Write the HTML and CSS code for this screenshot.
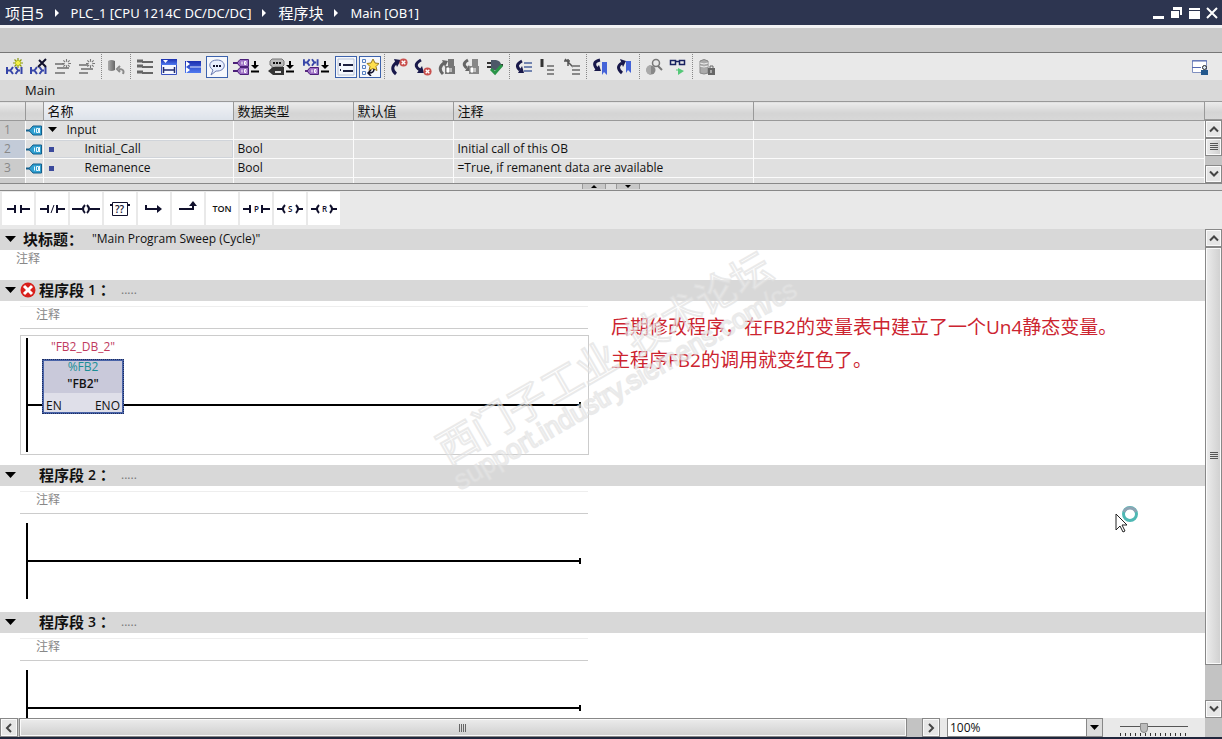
FILE: index.html
```html
<!DOCTYPE html>
<html lang="zh-CN">
<head>
	<meta charset="utf-8">
	<title>Main [OB1]</title>
	<link rel="stylesheet" href="styles.css">
</head>
<body>
	<!-- shapes used more than once -->
	<svg class="defs" width="0" height="0">
		<linearGradient id="gBlue" x1="0" y1="0" x2="0" y2="1"><stop offset="0" stop-color="#1c2fae"/><stop offset="1" stop-color="#4f7af0"/></linearGradient>
		<linearGradient id="gGrey" x1="0" y1="0" x2="1" y2="0"><stop offset="0" stop-color="#aaa"/><stop offset="1" stop-color="#666"/></linearGradient>
		<symbol id="tag" viewBox="0 0 16 11"><path d="M0 5.500h4" stroke="#135f8c" stroke-width="2"/><path d="M3 5.500L7 1h8.500v9H7z" fill="#2f9fd0" stroke="#135f8c"/><path d="M8.500 3.500v4M10.500 3.500h2v4h-2zM13.500 3v5" fill="none" stroke="#e8f8ff"/></symbol>
		<symbol id="ptag" viewBox="0 0 14 8"><path d="M0 4h3" stroke="#5a2a80" stroke-width="2"/><path d="M2 4l3-3.500h8.500v7H5z" fill="#9b6cc4" stroke="#4b1f78"/><path d="M7 2.500v3M9.500 2.500h1.500v3H9.500z" fill="none" stroke="#fff"/></symbol>
		<symbol id="contact" viewBox="0 0 17 9"><path d="M1 1v7M1 4.500h3M7 1L4.500 4.500 7 8M9.500 1L12 4.500 9.500 8M12 4.500h2M15.500 1v7" fill="none" stroke="#3645a8" stroke-width="2"/></symbol>
		<symbol id="spark" viewBox="0 0 10 10"><path d="M5 0v3M5 7v3M0 5h3M7 5h3M1.500 1.500l2 2M8.500 1.500l-2 2M1.500 8.500l2-2M8.500 8.500l-2-2" stroke="currentColor" stroke-width="1.200"/></symbol>
		<symbol id="err" viewBox="0 0 10 10"><circle cx="5" cy="5" r="4.500" fill="#c9504e"/><path d="M3 3l4 4M7 3L3 7" stroke="#fff" stroke-width="1.500"/></symbol>
		<symbol id="up" viewBox="0 0 10 10"><path d="M1 7.500L5 3.500l4 4" fill="none" stroke="#444" stroke-width="2"/></symbol>
		<symbol id="down" viewBox="0 0 10 10"><path d="M1 2.500l4 4 4-4" fill="none" stroke="#444" stroke-width="2"/></symbol>
		<symbol id="grip" viewBox="0 0 10 8"><path d="M1 .5h8M1 2.500h8M1 4.500h8M1 6.500h8" stroke="#555"/></symbol>
		<symbol id="load" viewBox="0 0 8 12"><path d="M0 10.500h8" stroke="#000" stroke-width="2"/><path d="M3 0h2v4h3L4 8 0 4h3z"/></symbol>
	</svg>

	<header class="titlebar">
		<nav class="crumbs">
			<a class="cn" href="#">项目5</a><i></i><a href="#">PLC_1 [CPU 1214C DC/DC/DC]</a><i></i><a class="cn" href="#">程序块</a><i></i><a href="#">Main [OB1]</a>
		</nav>
		<div class="winbtns">
			<button aria-label="Minimize"><svg width="12" height="12"><path d="M1 9h11v3H1z" fill="#fff"/></svg></button>
			<button aria-label="Float"><svg width="12" height="12"><path d="M3 0h9v8h-2V3H3z" fill="#fff"/><path d="M1 4h8v7H1z" fill="#fff"/></svg></button>
			<button aria-label="Maximize"><svg width="12" height="12"><path d="M1 1h11v2H1zM1 4h11v8H1z" fill="#fff"/></svg></button>
			<button aria-label="Close"><svg width="12" height="12"><path d="M1 1l10 10M11 1L1 11" stroke="#fff" stroke-width="2"/></svg></button>
		</div>
	</header>
	<div class="band"></div>

	<div class="toolbar">
		<button aria-label="Insert network"><svg width="18" height="18"><use href="#contact" x="0" y="8" width="17" height="9"/><g color="#8a9a10"><circle cx="12" cy="5" r="3" fill="#f4f046"/><use href="#spark" x="7" y="0" width="10" height="10"/></g></svg></button>
		<button aria-label="Delete network"><svg width="18" height="18"><use href="#contact" x="0" y="8" width="17" height="9"/><path d="M9 2l7 7M16 1L8 9" stroke="#10102c" stroke-width="2"/></svg></button>
		<button aria-label="Insert row"><svg width="18" height="18"><path d="M1 6h9M3 10h12M1 15h10" stroke="#8c8c8c" stroke-width="2"/><g color="#777"><use href="#spark" x="8" y="1" width="9" height="9"/></g></svg></button>
		<button aria-label="Add row"><svg width="18" height="18"><path d="M1 7h9M3 11h12M1 15h9" stroke="#8c8c8c" stroke-width="2"/><g color="#777"><use href="#spark" x="8" y="1" width="9" height="9"/></g></svg></button>
		<span class="sep"></span>
		<button aria-label="Reset start values"><svg width="18" height="18"><path d="M1 3q3-2 7 0v9q-4 2-7 0z" fill="url(#gGrey)"/><path d="M16 16q2-5-4-5M13 8l-3 3 3 3" fill="none" stroke="#8a8a8a" stroke-width="2"/></svg></button>
		<span class="sep"></span>
		<button aria-label="Open all networks"><svg width="18" height="18"><path d="M1 3h6M1 8h6M1 14h6" stroke="#666" stroke-width="3"/><path d="M6 4h11M6 9h11M6 15h11" stroke="#666" stroke-width="2"/></svg></button>
		<button aria-label="Close all networks"><svg width="18" height="18"><path d="M1.500 1.500h15v15h-15z" fill="#f4f7ff" stroke="#3a52c0"/><path d="M1 1h16v6H1z" fill="url(#gBlue)"/><path d="M3 2h5L5.500 5z" fill="#fff"/><path d="M3 12h12M3.500 9v6M14.500 9v6" stroke="#222c70" stroke-width="1.500"/></svg></button>
		<button aria-label="Free-form comments"><svg width="18" height="18"><path d="M1 3h16v12H1z" fill="url(#gBlue)"/><path d="M2 3l4 3-4 3zM2 9l4 3-4 3z" fill="#fff"/><path d="M6 9h11" stroke="#dce6ff"/></svg></button>
		<button class="on" aria-label="Network comments"><svg width="18" height="18"><path d="M9 2c9 0 10 10 1 11H8l-5 4 2-5C-1 8 2 2 9 2z" fill="#e8efff" stroke="#6a7ab0"/><path d="M5 8h2M8 8h2M11 8h2" stroke="#10102c" stroke-width="2"/></svg></button>
		<button aria-label="Operands"><svg width="18" height="18"><use href="#ptag" x="3" y="1" width="14" height="8"/><use href="#ptag" x="3" y="9" width="14" height="8"/><path d="M1 5h4M1 13h4" stroke="#4b1f78" stroke-width="2"/></svg></button>
		<button class="drop" aria-label="Operand options"><svg width="8" height="12"><use href="#load"/></svg></button>
		<button aria-label="Operand display"><svg width="18" height="18"><path d="M5 1h10l2 2v4l-2 2H8l-3 2V8L3 7V3z" fill="#bbb" stroke="#777"/><path d="M6 5h2M9 5h2M12 5h2" stroke="#111" stroke-width="2"/><path d="M1 13l5-4h11v8H6z" fill="#333"/><path d="M8 14h6" stroke="#ddd" stroke-width="2"/></svg></button>
		<button class="drop" aria-label="Display options"><svg width="8" height="12"><use href="#load"/></svg></button>
		<button aria-label="Tag information"><svg width="18" height="18"><use href="#contact" x="1" y="0" width="16" height="9"/><use href="#ptag" x="3" y="9" width="14" height="8"/></svg></button>
		<button class="drop" aria-label="Tag options"><svg width="8" height="12"><use href="#load"/></svg></button>
		<button class="on" aria-label="Show favorites bar"><svg width="18" height="18"><path d="M1 1h16v16H1z" fill="#f4f7fc" stroke="#b8c2d6"/><path d="M3 5v3M3 12h1M6 13h10M6 7h10" stroke="#1c2040" stroke-width="2"/></svg></button>
		<button class="on" aria-label="Favorites"><svg width="18" height="18"><path d="M1.500 1.500h3v3h-3zM1.500 7.500h3v3h-3zM1.500 13.500h3v3h-3z" fill="none" stroke="#557fc0"/><path d="M12 1l2 4 4 .5-3 3 1 4-4-2-4 2 1-4-3-3 4-.5z" fill="#ffdf4c" stroke="#9a7a20"/><path d="M13 11q0 4-5 4M10 12l-3 3 3 3" fill="none" stroke="#10102c" stroke-width="1.500"/></svg></button>
		<span class="sep"></span>
		<button aria-label="Previous error"><svg width="18" height="18"><path d="M6 16Q-1 10 7 4" fill="none" stroke="#18184a" stroke-width="3"/><path d="M4 1l7 1-4 7z" fill="#18184a"/><use href="#err" x="9" y="0" width="9" height="9"/></svg></button>
		<button aria-label="Next error"><svg width="18" height="18"><path d="M7 2Q-2 7 6 12" fill="none" stroke="#18184a" stroke-width="3"/><path d="M3 15h7L8 8z" fill="#18184a"/><use href="#err" x="9" y="9" width="9" height="9"/></svg></button>
		<button aria-label="Previous block"><svg width="18" height="18"><path d="M5 16Q-1 10 6 5" fill="none" stroke="#666" stroke-width="3"/><path d="M4 2l6 1-3 6z" fill="#666"/><path d="M10 1h6v7h-6zM7 8h10v8H7z" fill="#777"/><path d="M9 10h2v4H9zM13 10v4" fill="#fff" stroke="#fff"/></svg></button>
		<button aria-label="Next block"><svg width="18" height="18"><path d="M6 2Q-1 6 5 10" fill="none" stroke="#666" stroke-width="3"/><path d="M3 13h6L7 7z" fill="#666"/><path d="M10 1h6v7h-6zM7 8h10v8H7z" fill="#888"/><path d="M9 10h2v4H9zM13 10v4" fill="#fff" stroke="#fff"/></svg></button>
		<button aria-label="Check consistency"><svg width="18" height="18"><path d="M1 5h5M1 9h5M13 7h4" stroke="#333" stroke-width="2"/><path d="M5 2h5q5 1 5 5t-5 5H5z" fill="#4c5868"/><path d="M5 11l4 4 7-8" fill="none" stroke="#2a9448" stroke-width="3"/></svg></button>
		<span class="sep"></span>
		<button aria-label="Go to"><svg width="18" height="18"><path d="M7 3Q-1 7 5 12" fill="none" stroke="#18184a" stroke-width="3"/><path d="M3 15h6L7 8z" fill="#18184a"/><path d="M9 5h8M9 9h8M9 13h8" stroke="#7284b0" stroke-width="2"/></svg></button>
		<button aria-label="Statement"><svg width="18" height="18"><path d="M3 1v8" stroke="#333" stroke-width="3"/><path d="M8 8h7M8 12h7M8 16h7" stroke="#888" stroke-width="2"/></svg></button>
		<button aria-label="Remove statement"><svg width="18" height="18"><path d="M2 1l8 8M5 1v7M1 3h6" stroke="#555" stroke-width="1.500"/><path d="M9 8h8M9 12h8M9 16h8" stroke="#888" stroke-width="2"/></svg></button>
		<span class="sep"></span>
		<button aria-label="Next bookmark"><svg width="18" height="18"><path d="M8 2Q-1 4 5 11" fill="none" stroke="#18184a" stroke-width="3"/><path d="M2 13h7L7 7z" fill="#18184a"/><path d="M10 4h5v13l-3-3-2 3z" fill="#4463d8"/></svg></button>
		<button aria-label="Previous bookmark"><svg width="18" height="18"><path d="M6 15Q-1 9 6 5" fill="none" stroke="#18184a" stroke-width="3"/><path d="M4 1l6 2-3 6z" fill="#18184a"/><path d="M10 3h5v12l-3-3-2 3z" fill="#4463d8"/></svg></button>
		<span class="sep"></span>
		<button aria-label="Cross references"><svg width="18" height="18"><circle cx="6" cy="12" r="4.500" fill="#888"/><path d="M6 7a5 5 0 0 0 0 10z" fill="#aaa"/><circle cx="11" cy="5" r="3.500" fill="#e8e8e8" stroke="#777" stroke-width="1.500"/><path d="M13 8l4 4" stroke="#777" stroke-width="2"/></svg></button>
		<button aria-label="Monitoring"><svg width="18" height="18"><path d="M1.500 2.500h5v4h-5zM10.500 2.500h5v4h-5zM6.500 3.500h4" fill="none" stroke="#182060" stroke-width="1.500"/><path d="M9 10v7l6-4z" fill="#55c878"/><path d="M7 12h3" stroke="#55c878"/></svg></button>
		<span class="sep"></span>
		<button aria-label="Know-how protection"><svg width="18" height="18"><path d="M2 3q4-3 8 0v12q-4 2-8 0z" fill="#aaa" stroke="#888"/><path d="M2 5q4 2 8 0M2 8q4 2 8 0" fill="none" stroke="#eee"/><path d="M10 10h7v7h-7z" fill="#666"/><path d="M12 10V8h3v2" fill="none" stroke="#666"/><path d="M13 12v3" stroke="#eee"/></svg></button>
		<button class="last" aria-label="Block properties"><svg width="18" height="18"><path d="M1.500 2.500h14v12h-14z" fill="#fff" stroke="#8090c0"/><path d="M1 3h15M1 9.500h9" stroke="#5368b0"/><path d="M10 12h7v5h-7z" fill="#23588c"/><circle cx="13.500" cy="9.500" r="2" fill="#dce8f4" stroke="#222"/></svg></button>
	</div>

	<h1 class="blockname">Main</h1>

	<section class="interface">
		<table class="vars">
			<colgroup><col class="c-no"><col class="c-ico"><col class="c-name"><col class="c-type"><col class="c-def"><col class="c-note"><col></colgroup>
			<thead>
				<tr><th></th><th></th><th class="sorted">名称</th><th>数据类型</th><th>默认值</th><th>注释</th><th></th></tr>
			</thead>
			<tbody>
				<tr><td class="no">1</td><td class="ico"><svg width="16" height="11"><use href="#tag"/></svg></td><td><span class="group"><svg width="9" height="6"><path d="M0 0h9L4.500 5z"/></svg>Input</span></td><td></td><td></td><td></td><td></td></tr>
				<tr class="current"><td class="no">2</td><td class="ico"><svg width="16" height="11"><use href="#tag"/></svg></td><td class="sel"><span class="item">Initial_Call</span></td><td>Bool</td><td></td><td>Initial call of this OB</td><td></td></tr>
				<tr><td class="no">3</td><td class="ico"><svg width="16" height="11"><use href="#tag"/></svg></td><td><span class="item">Remanence</span></td><td>Bool</td><td></td><td>=True, if remanent data are available</td><td></td></tr>
				<tr><td class="no"></td><td></td><td></td><td></td><td></td><td></td><td></td></tr>
			</tbody>
		</table>
		<div class="vside">
			<div class="corner"></div>
			<div class="vscroll">
				<button aria-label="Scroll up"><svg width="10" height="10"><use href="#up"/></svg></button>
				<div class="thumb short"><svg width="10" height="8"><use href="#grip"/></svg></div>
				<div class="track"></div>
				<button aria-label="Scroll down"><svg width="10" height="10"><use href="#down"/></svg></button>
			</div>
		</div>
	</section>

	<div class="splitter">
		<button aria-label="Collapse"><svg width="6" height="3"><path d="M0 3h6L3 0z"/></svg></button>
		<button aria-label="Expand"><svg width="6" height="3"><path d="M0 0h6L3 3z"/></svg></button>
	</div>

	<div class="palette">
		<button aria-label="Normally open contact"><svg width="28" height="16"><path d="M3 8h8M18 8h8" stroke="#10102c" stroke-width="2"/><path d="M11 4v8M17 4v8" stroke="#10102c" stroke-width="2"/></svg></button>
		<button aria-label="Normally closed contact"><svg width="28" height="16"><path d="M2 8h8M19 8h8M10 4v8M19 4v8" stroke="#10102c" stroke-width="2"/><path d="M16 4l-3 8" stroke="#10102c"/></svg></button>
		<button aria-label="Assignment"><svg width="28" height="16"><path d="M0 8h10M18 8h10" stroke="#10102c" stroke-width="2"/><path d="M13 4q-4 4 0 8M15 4q4 4 0 8" fill="none" stroke="#10102c" stroke-width="2"/></svg></button>
		<button aria-label="Empty box"><svg width="28" height="16"><path d="M6.500 1.500h15v13h-15z" fill="none" stroke="#10102c"/><path d="M4 4h2M22 4h2" stroke="#10102c" stroke-width="2"/><text class="qq" x="9" y="12">??</text></svg></button>
		<button aria-label="Open branch"><svg width="28" height="16"><path d="M6 4v4h12" fill="none" stroke="#10102c" stroke-width="2"/><path d="M17 4l5 4-5 4z" fill="#10102c"/></svg></button>
		<button aria-label="Close branch"><svg width="28" height="16"><path d="M5 8h14V4" fill="none" stroke="#10102c" stroke-width="2"/><path d="M15 5l4-5 4 5z" fill="#10102c"/></svg></button>
		<button>TON</button>
		<button aria-label="Positive edge"><svg width="28" height="16"><path d="M1 8h8M20 8h8M8 4v8M20 4v8" stroke="#10102c" stroke-width="2"/><text x="12" y="11">P</text></svg></button>
		<button aria-label="Set output"><svg width="28" height="16"><path d="M1 8h6M21 8h6" stroke="#10102c" stroke-width="2"/><path d="M9 4q-4 4 0 8M20 4q4 4 0 8" fill="none" stroke="#10102c" stroke-width="2"/><text x="12" y="11">S</text></svg></button>
		<button aria-label="Reset output"><svg width="28" height="16"><path d="M1 8h6M21 8h6" stroke="#10102c" stroke-width="2"/><path d="M9 4q-4 4 0 8M20 4q4 4 0 8" fill="none" stroke="#10102c" stroke-width="2"/><text x="12" y="11">R</text></svg></button>
	</div>

	<main class="work">
		<div class="editor">
			<h2 class="bar title"><svg class="tri" width="11" height="6"><path d="M0 0h11L5.500 6z"/></svg><b>块标题：</b><span>"Main Program Sweep (Cycle)"</span></h2>
			<p class="blockcomment">注释</p>

			<h2 class="bar"><svg class="tri" width="11" height="6"><path d="M0 0h11L5.500 6z"/></svg><span class="state"><svg width="16" height="16"><circle cx="8" cy="8" r="7.500" fill="#d8201c"/><path d="M4 4l8 8M12 4l-8 8" stroke="#fff" stroke-width="3"/></svg></span><b>程序段</b><span class="num">1</span><b>：</b><em>.....</em></h2>
			<div class="network">
				<div class="ladder">
					<p class="comment">注释</p>
					<div class="canvas boxed">
						<svg class="wires" width="567" height="118"><path d="M6 2v114M6 69h553" stroke="#000" stroke-width="2"/><path d="M559 66v6" stroke="#000" stroke-width="2"/></svg>
						<div class="fb">
							<div class="instance">"FB2_DB_2"</div>
							<div class="fbbox">
								<div class="fbhead"><span>%FB2</span><b>"FB2"</b></div>
								<div class="pins"><span>EN</span><span>ENO</span></div>
							</div>
						</div>
					</div>
				</div>
				<p class="note">后期修改程序，在FB2的变量表中建立了一个Un4静态变量。<br>主程序FB2的调用就变红色了。</p>
			</div>

			<h2 class="bar"><svg class="tri" width="11" height="6"><path d="M0 0h11L5.500 6z"/></svg><span class="state"></span><b>程序段</b><span class="num">2</span><b>：</b><em>.....</em></h2>
			<div class="network">
				<div class="ladder">
					<p class="comment">注释</p>
					<div class="canvas"><svg class="wires" width="568" height="98"><path d="M7 9v76M7 47h553" stroke="#000" stroke-width="2"/><path d="M560 44v6" stroke="#000" stroke-width="2"/></svg></div>
				</div>
			</div>

			<h2 class="bar"><svg class="tri" width="11" height="6"><path d="M0 0h11L5.500 6z"/></svg><span class="state"></span><b>程序段</b><span class="num">3</span><b>：</b><em>.....</em></h2>
			<div class="network">
				<div class="ladder">
					<p class="comment">注释</p>
					<div class="canvas"><svg class="wires" width="568" height="98"><path d="M7 9v76M7 47h553" stroke="#000" stroke-width="2"/><path d="M560 44v6" stroke="#000" stroke-width="2"/></svg></div>
				</div>
			</div>

			<svg class="watermark" width="460" height="320">
				<g transform="translate(38 236) rotate(-30)">
					<text class="wm-cn" x="0" y="0">西门子工业  技术论坛</text>
					<text class="wm-url" x="-2" y="28">support.industry.siemens.com/cs</text>
				</g>
			</svg>
			<svg class="cursor" width="26" height="30">
				<circle cx="16" cy="10" r="6.500" fill="none" stroke="#4fb8b4" stroke-width="3"/><path d="M10 8a6.500 6.500 0 0 1 12 0" fill="none" stroke="#8ea4b4" stroke-width="3"/>
				<path d="M2 10v16l4-4 3 6 2-1-3-6h5z" fill="#fff" stroke="#222"/>
			</svg>
		</div>
		<div class="vside">
			<div class="vscroll">
				<button aria-label="Scroll up"><svg width="10" height="10"><use href="#up"/></svg></button>
				<div class="thumb"><svg width="10" height="8"><use href="#grip"/></svg></div>
				<div class="track"></div>
				<button aria-label="Scroll down"><svg width="10" height="10"><use href="#down"/></svg></button>
			</div>
		</div>
	</main>

	<footer class="bottom">
		<div class="hscroll">
			<button aria-label="Scroll left"><svg width="10" height="10"><path d="M7 1L3 5l4 4" fill="none" stroke="#444" stroke-width="2"/></svg></button>
			<div class="thumb"><svg width="8" height="8"><path d="M.5 0v8M2.500 0v8M4.500 0v8M6.500 0v8" stroke="#666"/></svg></div>
			<div class="track"></div>
			<button aria-label="Scroll right"><svg width="10" height="10"><path d="M3 1l4 4-4 4" fill="none" stroke="#444" stroke-width="2"/></svg></button>
		</div>
		<div class="zoom">
			<select aria-label="Zoom"><option>100%</option></select>
			<span class="arrow"><svg width="9" height="5"><path d="M0 0h9L4.500 5z"/></svg></span>
		</div>
		<input class="slider" type="range" min="0" max="100" value="33" aria-label="Zoom level">
		<div class="fill"></div>
	</footer>
</body>
</html>
```

FILE: styles.css
```css
* { box-sizing: border-box; }
body { margin: 0; height: 100vh; display: flex; flex-direction: column; overflow: hidden; background: #e9e9e9; color: #111; font: 12px/18px "Open Sans", "Noto Sans CJK SC", sans-serif; }
button { display: flex; align-items: center; justify-content: center; margin: 0; padding: 0; border: 0; background: none; color: inherit; font: inherit; }
svg { display: block; flex: none; }
h1, h2, p { margin: 0; font-weight: normal; }
.defs { position: absolute; }

.titlebar { flex: none; display: flex; justify-content: space-between; align-items: center; height: 28px; padding: 0 4px 0 5px; background: #2d3550; border-bottom: 3px solid #f2f2f4; }
.crumbs { display: flex; align-items: center; font: 13px/18px "Noto Sans", "Noto Sans CJK SC", sans-serif; }
.crumbs a { color: #fff; text-decoration: none; }
.crumbs .cn { font-size: 15px; }
.crumbs i { margin: 0 12px 0 11px; border-left: 4px solid #fff; border-top: 4px solid transparent; border-bottom: 4px solid transparent; }
.winbtns { display: flex; gap: 6px; }
.band { flex: none; height: 25px; background: #cacaca; border-bottom: 1px solid #777; }

.toolbar { flex: none; display: flex; align-items: center; height: 27px; padding: 0 10px 0 3px; background: #e9e9e9; }
.toolbar button { width: 24px; height: 24px; }
.toolbar .on { width: 22px; height: 22px; margin: 0 1px; border: 1px solid #3c62ac; background: #f6f8fc; }
.toolbar .drop { width: 11px; justify-content: flex-start; }
.toolbar .drop svg { margin-left: -2px; }
.toolbar .last { margin-left: auto; }
.sep { width: 5px; height: 26px; background: repeating-linear-gradient(transparent 0, transparent 1px, #e9e9e9 1px, #e9e9e9 2px), linear-gradient(90deg, transparent 2px, #888 2px, #888 3px, transparent 3px); }

.blockname { flex: none; height: 21px; padding-left: 25px; background: #d9d9d9; font-size: 13px; line-height: 20px; }

.interface { flex: none; display: flex; height: 82px; overflow: hidden; }
.vars { flex: 1; height: 95px; border-collapse: collapse; table-layout: fixed; }
.c-no { width: 25px; }
.c-ico { width: 18px; }
.c-name { width: 190px; }
.c-type { width: 120px; }
.c-def { width: 100px; }
.c-note { width: 300px; }
.vars th, .corner { height: 19px; border: 1px solid #999; border-width: 1px 1px 1px 0; background: linear-gradient(#ececec, #d4d4d4 60%, #d8d8d8); }
.vars th { padding: 0 4px; font-size: 13px; font-weight: normal; line-height: 17px; text-align: left; }
.vars .sorted { background: linear-gradient(#f0f2f5, #dde2ea); }
.vars td { height: 19px; padding: 0 4px; border: 1px solid #fbfbfb; border-width: 0 1px 1px 0; background: #e0e0e0; line-height: 18px; white-space: nowrap; }
.vars .no { background: #cbcbcb; color: #888; }
.vars .current .no { background: #c3cbd8; }
.vars .sel { border-color: #fbfbfb; box-shadow: inset 0 0 0 1px #d0d4da; }
.vars .ico { padding: 0; }
.group, .item { display: flex; align-items: center; }
.group svg { margin: 0 10px 0 0; }
.item::before { content: ""; width: 5px; height: 5px; margin: 0 31px 0 1px; background: #3b4a9c; }

.vside { flex: none; display: flex; flex-direction: column; width: 17px; background: #c3c3c3; }
.corner { flex: none; border-right: 0; }
.vscroll { flex: 1; display: flex; flex-direction: column; }
.vscroll button, .hscroll button { flex: none; width: 17px; height: 18px; border: 1px solid #888; background: #e6e6e6; box-shadow: inset 0 0 0 1px #fafafa; }
.thumb { display: flex; align-items: center; justify-content: center; border: 1px solid #888; background: linear-gradient(90deg, #ececec, #cfcfcf); box-shadow: inset 0 0 0 1px #fafafa; }
.vscroll .thumb { flex: 12; }
.vscroll .short { flex: none; height: 18px; }
.vscroll .track { flex: 1; }

.splitter { flex: none; display: flex; justify-content: center; gap: 10px; height: 8px; border: 1px solid #888; border-width: 1px 0; background: #dcdcdc; }
.splitter button { width: 24px; height: 5px; border: 1px solid #999; border-width: 0 1px; background: #c8c8c8; }

.palette { flex: none; display: flex; gap: 2px; height: 38px; padding: 1px 2px 4px; }
.palette button { width: 32px; background: #fff; font: 600 9px "Open Sans", sans-serif; }
.palette text { font: 600 8px "Open Sans", sans-serif; fill: #10102c; }
.palette .qq { font-size: 10px; }

.work { flex: 1; display: flex; min-height: 0; }
.editor { position: relative; flex: 1; min-width: 0; overflow: hidden; background: #fff; }
.bar { display: flex; align-items: center; height: 21px; padding: 0 0 2px 5px; background: #d8d8d8; font-size: 12px; white-space: pre; }
.bar b { font: bold 15px/18px "Noto Sans CJK TC", sans-serif; }
.bar em { margin-left: 10px; color: #777; font-style: normal; }
.num { margin: 0 0 0 4px; font-size: 14px; font-weight: 600; }
.title b { margin-left: 7px; }
.title span { margin-left: 9px; }
.state { width: 16px; height: 16px; margin: 0 3px 0 4px; }
.blockcomment { height: 30px; margin-left: 14px; padding-left: 2px; color: #888; line-height: 18px; }
.network { display: flex; align-items: flex-start; }
.ladder { flex: none; width: 569px; margin-left: 20px; padding-top: 5px; }
.comment { width: 568px; height: 23px; padding-left: 16px; border-top: 1px solid #eee; border-bottom: 1px solid #ccc; color: #888; line-height: 16px; }
.boxed { position: relative; margin: 6px 0 10px; border: 1px solid #ccc; }
.fb { position: absolute; left: 21px; top: 2px; width: 82px; text-align: center; }
.instance { height: 21px; color: #c03a5e; }
.fbbox { height: 55px; border: 2px solid #4a64a8; outline: 1px dotted #1c2c60; outline-offset: -1px; background: #dfdfe9; }
.fbhead { height: 32px; background: #c9c9da; line-height: 16px; }
.fbhead span, .fbhead b { display: block; height: 16px; line-height: 12px; }
.fbhead span { color: #1b8f96; }
.fbhead b { line-height: 14px; font-weight: 600; }
.pins { display: flex; justify-content: space-between; padding: 0 2px; line-height: 26px; }
.note { margin: 10px 0 0 22px; color: #cc2430; font: 19px/33px "Open Sans", "Noto Sans CJK SC", sans-serif; white-space: nowrap; }
.watermark { position: absolute; left: 410px; top: 0; overflow: visible; pointer-events: none; }
.watermark text { fill: #fff; fill-opacity: .4; stroke: #ddd; stroke-opacity: .6; stroke-width: 2px; white-space: pre; }
.wm-cn { font: 40px "Noto Sans CJK SC", sans-serif; }
.wm-url { font: 27px "Liberation Sans", sans-serif; }
.cursor { position: absolute; left: 1114px; top: 275px; }

.bottom { flex: none; display: flex; height: 21px; border-bottom: 2px solid #20263c; background: #e9e9e9; }
.hscroll { flex: 1; display: flex; background: #c3c3c3; }
.hscroll button { height: 19px; width: 18px; }
.hscroll .thumb { flex: 59; margin-left: 1px; background: linear-gradient(#ececec, #cfcfcf); }
.hscroll .track { flex: 1; }
.zoom { flex: none; display: flex; width: 156px; margin-left: 7px; border: 1px solid #888; background: #fff; }
.zoom select { flex: 1; min-width: 0; padding: 0 2px; border: 0; appearance: none; background: #fff; color: #111; font: 12px/16px "Open Sans", sans-serif; }
.arrow { display: flex; align-items: center; justify-content: center; width: 16px; border-left: 1px solid #888; background: #dcdcdc; }
.slider { flex: none; width: 68px; height: 19px; margin: 0 17px; appearance: none; background: linear-gradient(#555, #555) 0 8px / 100% 1px no-repeat, repeating-linear-gradient(90deg, #333 0, #333 1px, transparent 1px, transparent 5px) 0 15px / 100% 3px no-repeat; }
.slider::-webkit-slider-thumb { appearance: none; width: 8px; height: 10px; background: #bbb; border: 1px solid #888; border-radius: 0 0 4px 4px; }
.fill { flex: none; width: 17px; background: #c3c3c3; }
```
